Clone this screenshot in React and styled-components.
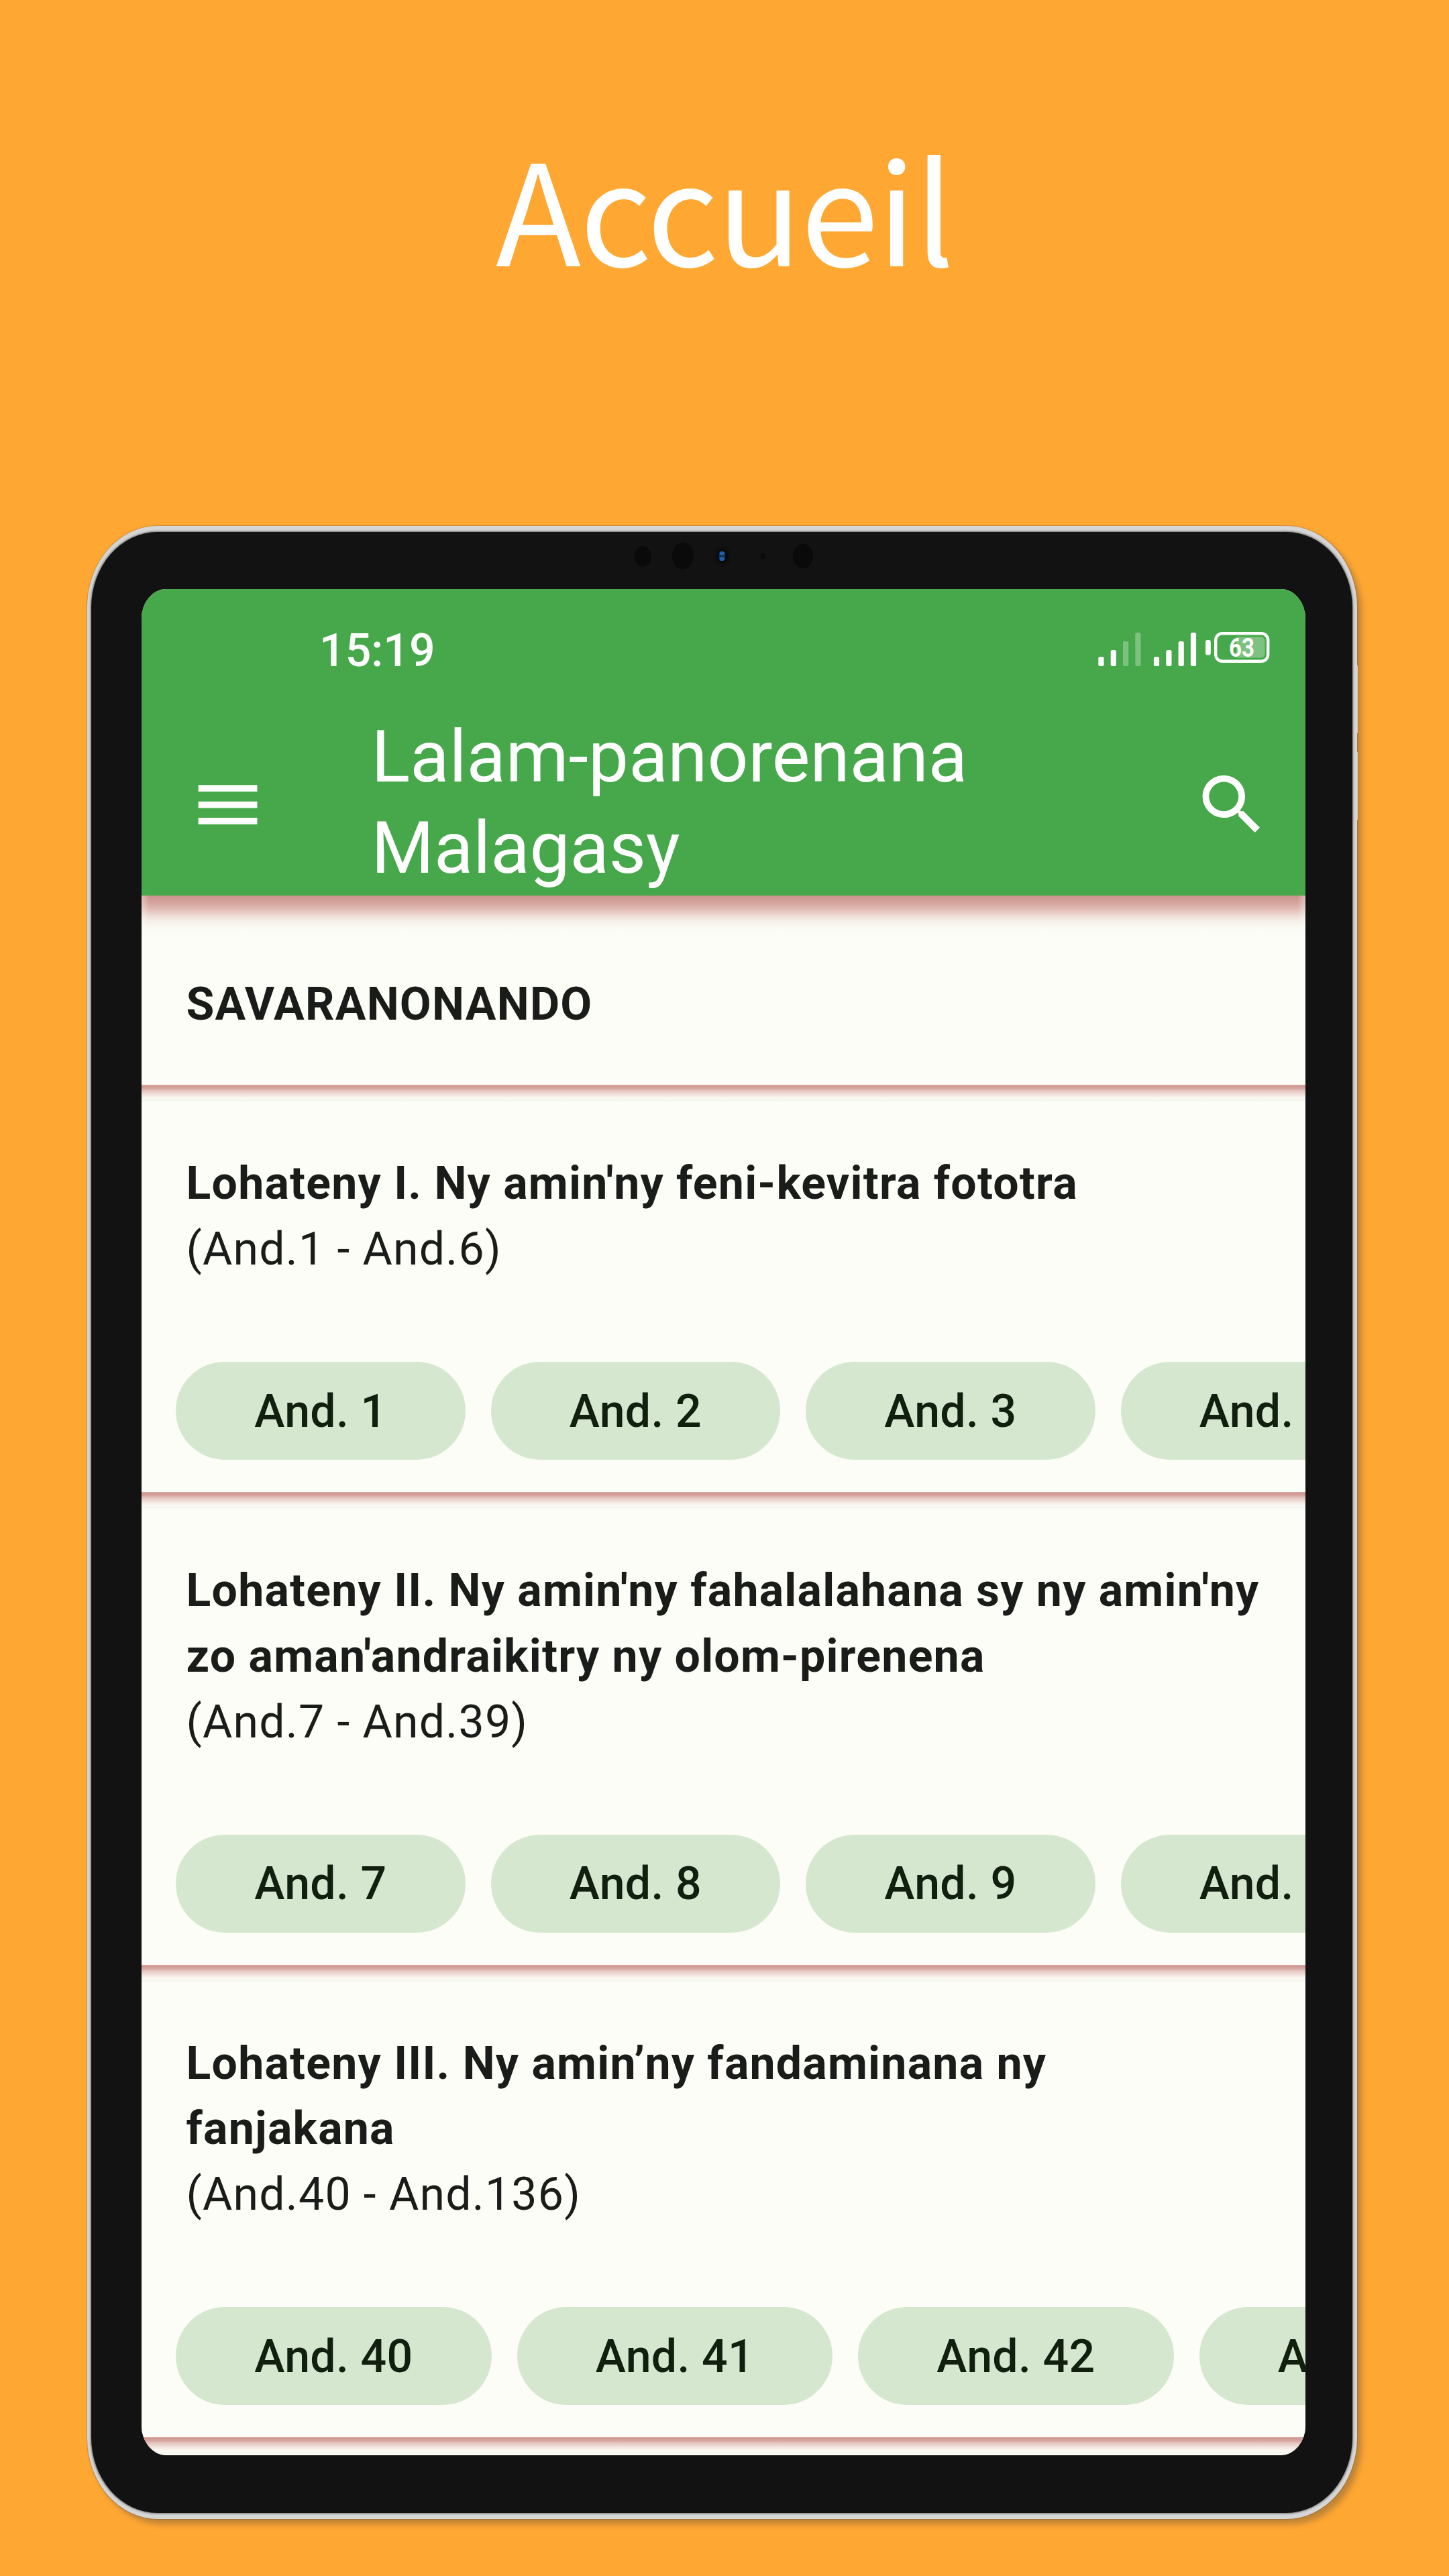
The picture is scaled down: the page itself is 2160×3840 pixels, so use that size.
import React from "react";
import styled, { createGlobalStyle, css } from "styled-components";

const GlobalStyle = createGlobalStyle`
  * { box-sizing: border-box; }
  body { margin: 0; background: #ffa733; }
`;

const roboto = css`font-family: Roboto, "Noto Sans", sans-serif;`;

const Page = styled.main`
  width: 2160px;
  height: 3840px;
  display: flex;
  flex-direction: column;
  background: #ffa733;
  overflow: hidden;
`;

const Hero = styled.header`
  height: 784px;
  padding-top: 154px;
  text-align: center;
`;

const HeroTitle = styled.h1`
  margin: 0;
  font-family: "Noto Sans CJK SC", "Noto Sans CJK JP", sans-serif;
  font-weight: 400;
  font-size: 209px;
  line-height: 304px;
  letter-spacing: -1.8px;
  color: #fff;
`;

const Tablet = styled.section`
  position: relative;
  width: 1893px;
  height: 2971px;
  margin-left: 130px;
  padding: 9px 7px 9px 6px;
  border-radius: 105px / 121px;
  background: #d6d6d6;
  box-shadow: 7px 8px 8px rgba(60, 60, 60, 0.32), 0 0 1px 1px rgba(120, 100, 70, 0.35);
`;

const SideButton = styled.span`
  position: absolute;
  left: 100%;
  top: ${(p) => p.$top}px;
  width: 1px;
  height: 101px;
  background: #d8c8ae;
`;

const Bezel = styled.div`
  width: 1880px;
  height: 2953px;
  padding: 85px 70px 86px 75px;
  border-radius: 99px / 113px;
  background: #121212;
  box-shadow: 0 0 3px 0.5px #6c6c6c;
`;

const Camera = styled.svg`
  position: absolute;
  left: 800px;
  top: 15px;
  width: 300px;
  height: 60px;
`;

const Screen = styled.div`
  display: flex;
  flex-direction: column;
  width: 1735px;
  height: 2782px;
  overflow: hidden;
  border-radius: 37px / 44px;
  background: #fcfdf6;
`;

const StatusBar = styled.div`
  display: flex;
  justify-content: space-between;
  height: 184px;
  flex: none;
  padding: 51px 53px 0 265px;
  background: #46a84a;
`;

const Clock = styled.time`
  ${roboto}
  font-weight: 500;
  font-size: 68px;
  line-height: 82px;
  color: #fff;
`;

const StatusIcons = styled.svg`
  width: 260px;
  height: 60px;
  margin-top: 9px;
`;

const BatteryLabel = styled.text`
  ${roboto}
  font-weight: 700;
  font-size: 38.5px;
  fill: #fff;
`;

const AppBar = styled.div`
  display: flex;
  align-items: center;
  height: 273.4px;
  flex: none;
  padding: 1px 51px 0 70px;
  background: #46a84a;
`;

const BarIcon = styled.svg`
  flex: none;
  width: 117.1px;
  height: 117.1px;
  fill: #fff;
`;

const AppTitle = styled.h2`
  ${roboto}
  flex: 1;
  margin: -4px 0 0 155.5px;
  font-weight: 400;
  font-size: 107px;
  line-height: 136.6px;
  color: #fff;
`;

const Line = styled.span`
  display: block;
  white-space: nowrap;
`;

const List = styled.div`
  flex: none;
  display: flex;
  flex-direction: column;
`;

const headerShadow = css`
  background:
    linear-gradient(90deg, rgba(252, 253, 246, 0.4) 0, rgba(252, 253, 246, 0) 12px, rgba(252, 253, 246, 0) 1723px, rgba(252, 253, 246, 0.4) 1735px),
    linear-gradient(180deg, #cb928c 0, #d3a29b 10px, #dfbbb4 20px, #eedcd5 30px, #f6efe8 38px, #fafaf3 48px, #fcfdf6 58px);
`;

const cardShadow = css`
  background: linear-gradient(180deg, #d8aaa4 0, #d19993 2px, #d6a49e 5px, #e4c6c0 9px, #f0e0d9 14px, #f9f5ee 19px, #fafaf3 22px, #f4f5ef 22.5px, #f4f5ef 24px, #fcfdf6 25px);
`;

const Section = styled.section`
  flex: none;
  height: ${(p) => p.$height}px;
  padding-top: ${(p) => (p.$first ? 114 : 99)}px;
  ${(p) => (p.$first ? headerShadow : cardShadow)}
`;

const SectionTitle = styled.h3`
  ${roboto}
  margin: 0 0 0 66.5px;
  font-weight: 700;
  font-size: 68px;
  line-height: 97.6px;
  letter-spacing: 1.23px;
  color: #1a1c19;
`;

const Range = styled.p`
  ${roboto}
  margin: 0 0 0 66.5px;
  font-weight: 400;
  font-size: 68px;
  line-height: 97.6px;
  letter-spacing: 1.2px;
  color: #1a1c19;
`;

const Chips = styled.div`
  display: flex;
  gap: 38.1px;
  margin: 118.6px 0 0 51.2px;
`;

const Chip = styled.button`
  ${roboto}
  flex: none;
  height: 146px;
  padding: 3px 117.1px 0;
  border: 0;
  border-radius: 73px;
  background: #d5e8cf;
  color: #111f0f;
  font-weight: 500;
  font-size: 68px;
  line-height: 97.6px;
  letter-spacing: 0.35px;
  white-space: nowrap;
`;

const sections = [
  { height: 282.1, first: true, title: ["SAVARANONANDO"] },
  {
    height: 606.9,
    title: ["Lohateny I. Ny amin'ny feni-kevitra fototra"],
    range: "(And.1 - And.6)",
    chips: ["And. 1", "And. 2", "And. 3", "And. 4"],
  },
  {
    height: 704.5,
    title: ["Lohateny II. Ny amin'ny fahalalahana sy ny amin'ny", "zo aman'andraikitry ny olom-pirenena"],
    range: "(And.7 - And.39)",
    chips: ["And. 7", "And. 8", "And. 9", "And. 10"],
  },
  {
    height: 704.5,
    title: ["Lohateny III. Ny amin’ny fandaminana ny", "fanjakana"],
    range: "(And.40 - And.136)",
    chips: ["And. 40", "And. 41", "And. 42", "And. 43"],
  },
  { height: 300, title: [] },
];

const bars = [
  { x: 0.3, y: 37 },
  { x: 18.7, y: 27 },
  { x: 37, y: 14 },
  { x: 55.3, y: 1 },
];

function Signal({ offset, strength }) {
  return bars.map((b, i) => (
    <rect
      key={i}
      x={b.x + offset}
      y={b.y}
      width="8.2"
      height={51 - b.y}
      rx="2.5"
      fill="#fff"
      opacity={i < strength ? 1 : 0.3}
    />
  ));
}

export default function App() {
  return (
    <Page>
      <GlobalStyle />
      <Hero>
        <HeroTitle>Accueil</HeroTitle>
      </Hero>
      <Tablet>
        <SideButton $top={208} />
        <SideButton $top={337} />
        <Bezel>
          <Screen>
            <StatusBar>
              <Clock>15:19</Clock>
              <StatusIcons viewBox="0 0 260 60">
                <g transform="translate(4 4)">
                  <Signal offset={0} strength={2} />
                  <Signal offset={82.6} strength={4} />
                  <rect x="160" y="12" width="7.8" height="22.5" rx="3" fill="#fff" />
                  <rect x="175.2" y="2.2" width="78" height="41.6" rx="10" fill="none" stroke="#fff" strokeWidth="4.4" />
                  <path d="M206 7.5h36q6.5 0 6.5 6.5v18q0 6.5-6.5 6.5h-36z" fill="#fff" opacity="0.3" />
                  <BatteryLabel x="214" y="36.6" textAnchor="middle" textLength="38" lengthAdjust="spacingAndGlyphs">63</BatteryLabel>
                </g>
              </StatusIcons>
            </StatusBar>
            <AppBar>
              <BarIcon viewBox="0 0 24 24">
                <path d="M3 18h18v-2H3v2zm0-5h18v-2H3v2zm0-7v2h18V6H3z" />
              </BarIcon>
              <AppTitle>
                <Line>Lalam-panorenana</Line>
                <Line>Malagasy</Line>
              </AppTitle>
              <BarIcon viewBox="0 0 24 24">
                <path d="M15.5 14h-.79l-.28-.27C15.41 12.59 16 11.11 16 9.5 16 5.91 13.09 3 9.5 3S3 5.91 3 9.5 5.91 16 9.5 16c1.61 0 3.09-.59 4.23-1.57l.27.28v.79l5 4.99L20.49 19l-4.99-5zm-6 0C7.01 14 5 11.99 5 9.5S7.01 5 9.5 5 14 7.01 14 9.5 11.99 14 9.5 14z" />
              </BarIcon>
            </AppBar>
            <List>
              {sections.map((s, i) => (
                <Section key={i} $height={s.height} $first={s.first}>
                  {s.title.length > 0 && (
                    <SectionTitle>
                      {s.title.map((t) => (
                        <Line key={t}>{t}</Line>
                      ))}
                    </SectionTitle>
                  )}
                  {s.range && <Range>{s.range}</Range>}
                  {s.chips && (
                    <Chips>
                      {s.chips.map((c) => (
                        <Chip key={c}>{c}</Chip>
                      ))}
                    </Chips>
                  )}
                </Section>
              ))}
            </List>
          </Screen>
        </Bezel>
        <Camera viewBox="0 0 300 60">
          <g fill="#0a0a0a">
            <ellipse cx="28.3" cy="30.3" rx="12.5" ry="15.3" />
            <ellipse cx="88" cy="29.7" rx="16" ry="20" />
            <ellipse cx="146.3" cy="30" rx="13" ry="15.5" fill="#0f0f0f" />
            <ellipse cx="147.3" cy="30" rx="8.5" ry="10" fill="#080808" />
            <ellipse cx="207.3" cy="30.3" rx="3.2" ry="4.5" />
            <ellipse cx="267" cy="30" rx="15" ry="18" />
          </g>
          <ellipse cx="146.3" cy="30" rx="5" ry="7.6" fill="#0a3158" />
          <ellipse cx="146.3" cy="25.8" rx="3.8" ry="2.8" fill="#1d62a8" />
          <ellipse cx="146.3" cy="34.2" rx="3.8" ry="2.8" fill="#1d62a8" />
        </Camera>
      </Tablet>
    </Page>
  );
}
